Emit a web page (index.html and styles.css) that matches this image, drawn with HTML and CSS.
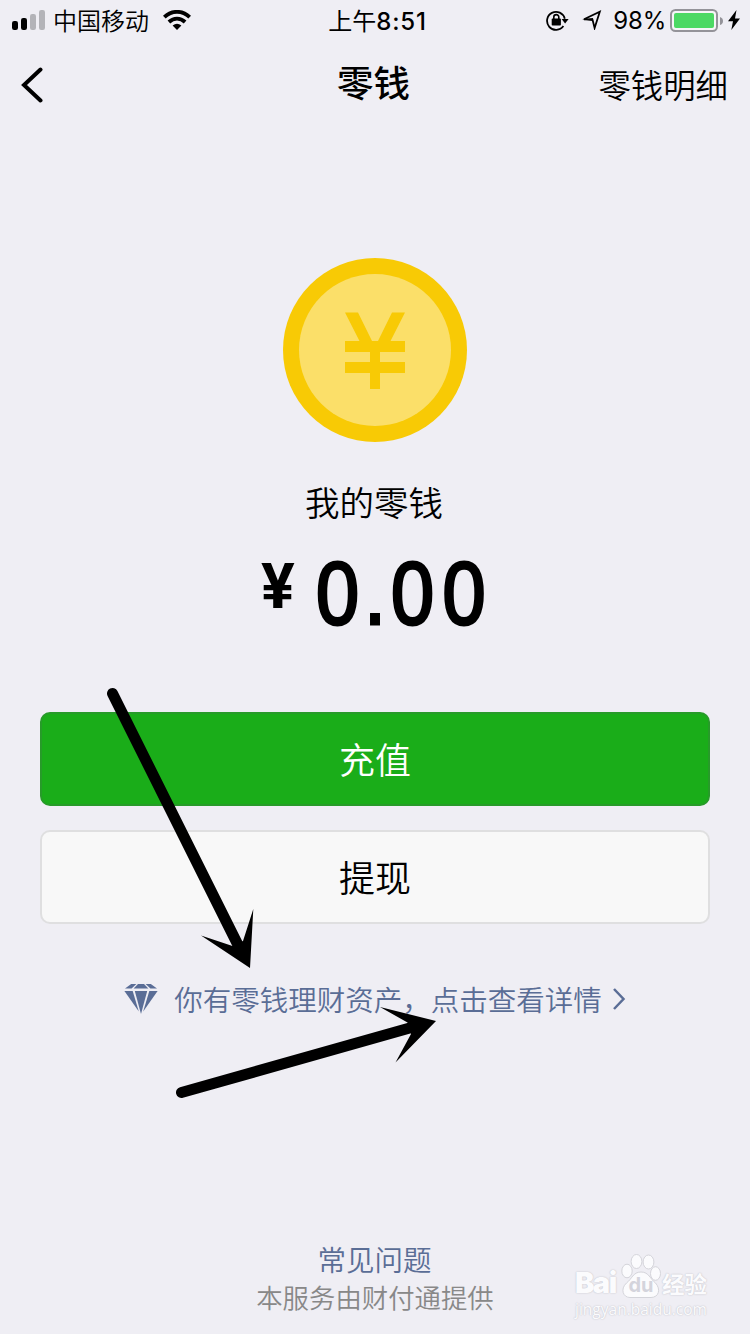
FILE: index.html
```html
<!DOCTYPE html>
<html lang="zh-CN">
<head>
<meta charset="utf-8">
<title>零钱</title>
<link rel="stylesheet" href="styles.css">
</head>
<body>
<div class="screen">
  <header class="status">
    <div class="status-left">
      <svg class="signal" width="34" height="21" viewBox="0 0 34 21"><rect x="0" y="11" width="6" height="9" rx="2.2"/><rect x="9" y="8" width="6" height="12" rx="2.2"/><g fill="#b3b3b8"><rect x="18" y="4" width="6" height="16" rx="2.2"/><rect x="27" y="0" width="6" height="20" rx="2.2"/></g></svg>
      <span class="carrier">中国移动</span>
      <svg class="wifi" width="28" height="20" viewBox="0 0 28 20"><g fill="none" stroke="#000" stroke-width="3.9"><path d="M1.3 7.1C8.7 .1 19.3 .1 26.7 7.1"/><path d="M5.9 12C10.8 7.5 17.2 7.5 22.1 12"/></g><path d="M9.6 15.500Q14 11.900 18.400 15.500L14 20Z"/></svg>
    </div>
    <div class="time">上午<span class="clock">8:51</span></div>
    <div class="status-right">
      <svg class="lock" width="23" height="21" viewBox="0 0 23 21"><path d="M17.400 16.100A9 9 0 1 1 18.800 8.700" fill="none" stroke="#000" stroke-width="1.8"/><path d="M15.600 8.900H22.600L19.100 13.400Z"/><rect x="5.700" y="8.600" width="9.200" height="7" rx=".8"/><path d="M7.800 9.500V7.100a2.500 2.500 0 0 1 5 0v2.400" fill="none" stroke="#000" stroke-width="1.600"/></svg>
      <svg class="locate" width="20" height="20" viewBox="0 0 20 20"><path d="M2 9.300L17.800 1.800L12.600 18L10.500 9.600Z" fill="none" stroke="#000" stroke-width="1.8"/><path d="M0 9.200L11 8L10.800 10.900Z"/></svg>
      <span class="percent">98%</span>
      <svg class="battery" width="53" height="24" viewBox="0 0 53 24"><rect x="1" y="1" width="46" height="21" rx="4.5" fill="#f6f5f8" stroke="#949399" stroke-width="2"/><rect x="4" y="4" width="40" height="15" rx="2" fill="#4cd964"/><path d="M50 8Q53 9 53 12Q53 15 50 16Z" fill="#949399"/></svg>
      <svg class="bolt" width="12" height="20" viewBox="0 0 12 20"><path d="M8.500 0L0 11.200H5L3.300 20L12 8.500H7Z"/></svg>
    </div>
  </header>

  <nav class="nav">
    <svg class="back" width="22" height="36" viewBox="0 0 22 36"><path d="M19.500 2.500L3 18L19.500 33.500" fill="none" stroke="#000" stroke-width="4" stroke-linecap="round"/></svg>
    <h1 class="title">零钱</h1>
    <a class="detail">零钱明细</a>
  </nav>

  <main class="main">
    <svg class="coin" width="184" height="184" viewBox="0 0 184 184"><circle cx="92" cy="92" r="92" fill="#f8ca05"/><circle cx="92" cy="92" r="76" fill="#fbdf69"/><path fill="#f8ca05" d="M62 54.500H75L89 83H95L109 54.500H122L107.500 83H122V94H97V104H122V115H97V131H87V115H62V104H87V94H62V83H76.500Z"/></svg>
    <p class="label">我的零钱</p>
    <p class="amount"><span class="yen">¥</span><span class="value"><span class="units">0</span><span class="point">.</span>00</span></p>
    <div class="actions">
      <button class="btn primary">充值</button>
      <button class="btn plain">提现</button>
    </div>
    <a class="assets">
      <svg class="gem" width="34" height="31" viewBox="0 0 34 31"><g fill="#5a6d96"><path d="M7.200 0H12.400L7.600 4.600H1Z"/><path d="M14 0H20L24.400 4.600H9.600Z"/><path d="M21.600 0H26.800L33 4.600H26.400Z"/><path d="M.4 7H8.700L14.800 27.600Z"/><path d="M10.800 7H23.200L17 30Z"/><path d="M25.300 7H33.600L19.200 27.600Z"/></g></svg>
      <span class="assets-text">你有零钱理财资产，点击查看详情</span>
      <svg class="more" width="14" height="24" viewBox="0 0 14 24"><path d="M2 2L11.500 12L2 22" fill="none" stroke="#5a6d96" stroke-width="2.5"/></svg>
    </a>
  </main>

  <footer class="footer">
    <a class="faq">常见问题</a>
    <p class="provider">本服务由财付通提供</p>
  </footer>

  <svg class="arrows" width="750" height="1334" viewBox="0 0 750 1334"><g stroke="#000" stroke-width="11" stroke-linecap="round"><path d="M112.500 693.500L239 947"/><path d="M181.500 1092.500L415 1026.500"/></g><path d="M250 968L201 935.500L232.500 946L243 941L253.300 909Z"/><path d="M436 1021L380 1007L407.500 1022.500L411 1034L395.500 1062.500Z"/></svg>

  <div class="watermark">
    <div class="brand"><span class="bai">Bai</span><span class="paw"><svg width="40" height="44" viewBox="0 0 40 44"><g fill="#fbfbfd" stroke="#d4d4da" stroke-width="1"><ellipse cx="6" cy="17" rx="5.200" ry="6.800"/><ellipse cx="15.500" cy="7.500" rx="5.400" ry="7"/><ellipse cx="27.500" cy="8" rx="5.400" ry="7"/><ellipse cx="34.500" cy="19.500" rx="5" ry="6.800"/><path d="M20 18C12 18 11 25 5.500 29C-1 35 2 43.500 9 43.500H30C38 43.500 40 35 34.500 29C29 25 28 18 20 18Z"/></g></svg><span class="du">du</span></span><span class="jy">经验</span></div>
    <div class="site">jingyan.baidu.com</div>
  </div>
</div>
</body>
</html>
```
FILE: styles.css
```css
* { box-sizing: border-box; }
body, h1, p { margin: 0; }
body { background: #efeef4; }
.screen {
  position: relative;
  display: flex;
  flex-direction: column;
  width: 750px;
  height: 1334px;
  overflow: hidden;
  background: #efeef4;
  color: #000;
  font-family: "Noto Sans CJK SC", sans-serif;
  font-weight: 350;
}
svg { display: block; flex: none; }

.status {
  display: grid;
  grid-template-columns: 1fr auto 1fr;
  height: 40px;
  padding: 0 10px 0 12px;
  font-size: 24px;
  line-height: 38px;
}
.status-left, .status-right { display: flex; align-items: flex-start; }
.status-right { justify-content: flex-end; }
.signal { margin-top: 10px; }
.carrier { margin-left: 7px; line-height: 39px; }
.wifi { margin: 10px 0 0 14px; }
.time { margin-left: 3px; font-weight: 400; line-height: 39px; }
.clock { font-family: Inter, sans-serif; font-weight: 550; letter-spacing: .8px; }
.percent { margin-left: 11px; font-family: Inter, sans-serif; font-weight: 400; line-height: 42px; letter-spacing: -.2px; }
.lock { margin-top: 10px; }
.locate { margin: 10px 0 0 13px; }
.battery { margin: 9px 0 0 4px; }
.bolt { margin: 10px 0 0 5px; }

.nav {
  display: grid;
  grid-template-columns: 1fr auto 1fr;
  align-items: center;
  height: 88px;
  padding: 0 22px 0 21px;
}
.back { margin-top: 1px; }
.title { font-size: 36.500px; line-height: 48px; font-weight: 500; margin: -4px 0 0 -2px; }
.detail { justify-self: end; font-size: 32.400px; line-height: 44px; }

.main { display: flex; flex-direction: column; align-items: center; padding: 130px 40px 0; }
.label { margin: 35px 0 0 -2px; font-size: 34.500px; line-height: 48px; }
.amount {
  display: flex;
  align-items: flex-start;
  height: 100px;
  margin-top: 17px;
  line-height: 100px;
}
.yen { margin-top: 1px; font: 700 63px/88px Roboto, sans-serif; }
.value {
  width: 173px;
  margin: 1px 0 0 21px;
  font: 400 89px/100px "Liberation Sans", sans-serif;
  letter-spacing: 9.600px;
  white-space: nowrap;
  -webkit-text-stroke: 3px #000;
  transform: scaleX(.87);
  transform-origin: left;
}
.units, .point { letter-spacing: 6px; }
.actions { display: flex; flex-direction: column; gap: 24px; width: 670px; margin-top: 70px; }
.btn {
  height: 94px;
  padding: 0 0 2px;
  border: 2px solid #dfdfe0;
  border-radius: 10px;
  font: 350 36px/50px "Noto Sans CJK SC", sans-serif;
}
.primary { background: #1aad19; border-color: #279b29; color: #fff; }
.plain { background: #f8f8f8; color: #000; }
.assets { display: flex; align-items: center; margin-top: 54px; color: #5a6d96; }
.assets-text { margin-left: 16px; font-size: 28.500px; line-height: 42px; }
.more { margin-left: 10px; }

.footer { margin-top: auto; padding: 0 0 18px; text-align: center; }
.faq { display: block; margin-left: -1px; color: #5a6d96; font-size: 28.500px; line-height: 38px; }
.provider { color: #888; font-size: 26.400px; line-height: 38px; }

.arrows { position: absolute; inset: 0; }

.watermark {
  position: absolute;
  left: 575px;
  top: 1253px;
  width: 140px;
  color: #fbfbfd;
  text-shadow: 0 0 1px #c4c4cc, 0 0 2px #cfcfd6;
}
.brand { display: flex; align-items: flex-end; height: 45px; }
.bai { width: 46px; margin-bottom: 2px; font: 900 29px/26px Inter, sans-serif; letter-spacing: -1.500px; }
.paw { display: grid; width: 40px; }
.paw > * { grid-area: 1 / 1; }
.du { place-self: end center; color: #d4d4dc; font: 700 20px/26px Inter, sans-serif; text-shadow: none; }
.jy { margin-left: 1px; font-size: 22.500px; line-height: 30px; font-weight: 700; }
.site { margin-top: 3px; font: 400 15.500px/16px "Open Sans", sans-serif; }
```
